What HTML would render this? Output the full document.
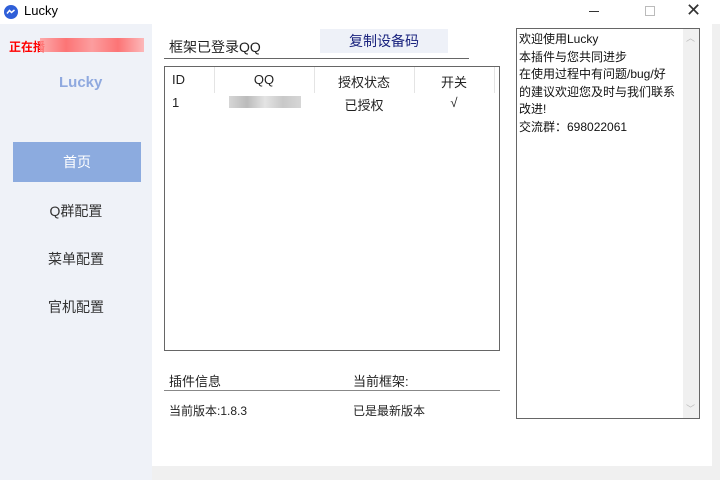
<!DOCTYPE html>
<html><head><meta charset="utf-8"><style>
*{margin:0;padding:0;box-sizing:border-box}
body{width:720px;height:480px;background:#f0f0f0;font-family:"Liberation Sans","Noto Sans CJK SC",sans-serif;font-size:13px;color:#222;position:relative;overflow:hidden}
.a{position:absolute}
</style></head><body>
<div class="a" style="left:0;top:0;width:720px;height:24px;background:#fff"></div>
<svg class="a" style="left:4px;top:5px" width="14" height="14" viewBox="0 0 14 14"><circle cx="7" cy="7" r="7" fill="#2f5fd8"/><path d="M3 8.5 L5.5 5.5 L7.5 7.5 L10.5 5" stroke="#fff" stroke-width="1.5" fill="none"/></svg>
<div class="a" style="left:24px;top:3px;font-size:13px;color:#000">Lucky</div>
<div class="a" style="left:589px;top:11px;width:10px;height:1px;background:#333"></div>
<div class="a" style="left:645px;top:6px;width:10px;height:10px;border:1px solid #bbb"></div>
<div class="a" style="left:686px;top:0px;font-size:18px;color:#333">✕</div>

<div class="a" style="left:0;top:24px;width:152px;height:456px;background:#eff2f8"></div>
<div class="a" style="left:9px;top:38px;font-size:12px;font-weight:bold;color:#f00">正在播</div>
<div class="a" style="left:40px;top:38px;width:104px;height:14px;background:linear-gradient(90deg,#f99,#f55,#f88,#f55,#faa);opacity:.8"></div>
<div class="a" style="left:59px;top:74px;font-size:15px;font-weight:bold;color:#8fa9df">Lucky</div>
<div class="a" style="left:13px;top:142px;width:128px;height:40px;background:#8cabdf;color:#fff;font-size:14px;text-align:center;line-height:40px">首页</div>
<div class="a" style="left:0;top:201px;width:152px;text-align:center;font-size:14px;color:#333">Q群配置</div>
<div class="a" style="left:0;top:249px;width:152px;text-align:center;font-size:14px;color:#333">菜单配置</div>
<div class="a" style="left:0;top:297px;width:152px;text-align:center;font-size:14px;color:#333">官机配置</div>

<div class="a" style="left:152px;top:24px;width:560px;height:442px;background:#fff"></div>
<div class="a" style="left:169px;top:37px;font-size:14px;color:#222">框架已登录QQ</div>
<div class="a" style="left:164px;top:58px;width:305px;height:1px;background:#666"></div>
<div class="a" style="left:320px;top:29px;width:128px;height:24px;background:#eef1f8;color:#1a237e;font-size:14px;text-align:center;line-height:24px">复制设备码</div>

<div class="a" style="left:164px;top:66px;width:336px;height:285px;border:1px solid #666"></div>
<div class="a" style="left:214px;top:67px;width:1px;height:26px;background:#e4e4e4"></div>
<div class="a" style="left:314px;top:67px;width:1px;height:26px;background:#e4e4e4"></div>
<div class="a" style="left:414px;top:67px;width:1px;height:26px;background:#e4e4e4"></div>
<div class="a" style="left:494px;top:67px;width:1px;height:26px;background:#e4e4e4"></div>
<div class="a" style="left:172px;top:72px;color:#222">ID</div>
<div class="a" style="left:214px;top:72px;width:100px;text-align:center">QQ</div>
<div class="a" style="left:314px;top:72px;width:100px;text-align:center">授权状态</div>
<div class="a" style="left:414px;top:72px;width:80px;text-align:center">开关</div>
<div class="a" style="left:172px;top:95px">1</div>
<div class="a" style="left:229px;top:96px;width:72px;height:12px;background:linear-gradient(90deg,#ccc,#aaa,#ddd,#bbb,#ccc);opacity:.8"></div>
<div class="a" style="left:314px;top:95px;width:100px;text-align:center">已授权</div>
<div class="a" style="left:414px;top:95px;width:80px;text-align:center">√</div>

<div class="a" style="left:169px;top:371px">插件信息</div>
<div class="a" style="left:353px;top:371px">当前框架:</div>
<div class="a" style="left:164px;top:390px;width:336px;height:1px;background:#888"></div>
<div class="a" style="left:169px;top:402px;font-size:12px">当前版本:1.8.3</div>
<div class="a" style="left:353px;top:402px;font-size:12px">已是最新版本</div>

<div class="a" style="left:516px;top:28px;width:184px;height:391px;border:1px solid #666;background:#fff"></div>
<div class="a" style="left:683px;top:29px;width:16px;height:389px;background:#f0f0f0"></div>
<div class="a" style="left:686px;top:31px;font-size:9px;color:#bbb">︿</div>
<div class="a" style="left:686px;top:402px;font-size:9px;color:#bbb">﹀</div>
<div class="a" style="left:519px;top:31px;font-size:12px;line-height:17.5px;color:#111">欢迎使用Lucky<br>本插件与您共同进步<br>在使用过程中有问题/bug/好<br>的建议欢迎您及时与我们联系<br>改进!<br>交流群：698022061</div>
</body></html>
